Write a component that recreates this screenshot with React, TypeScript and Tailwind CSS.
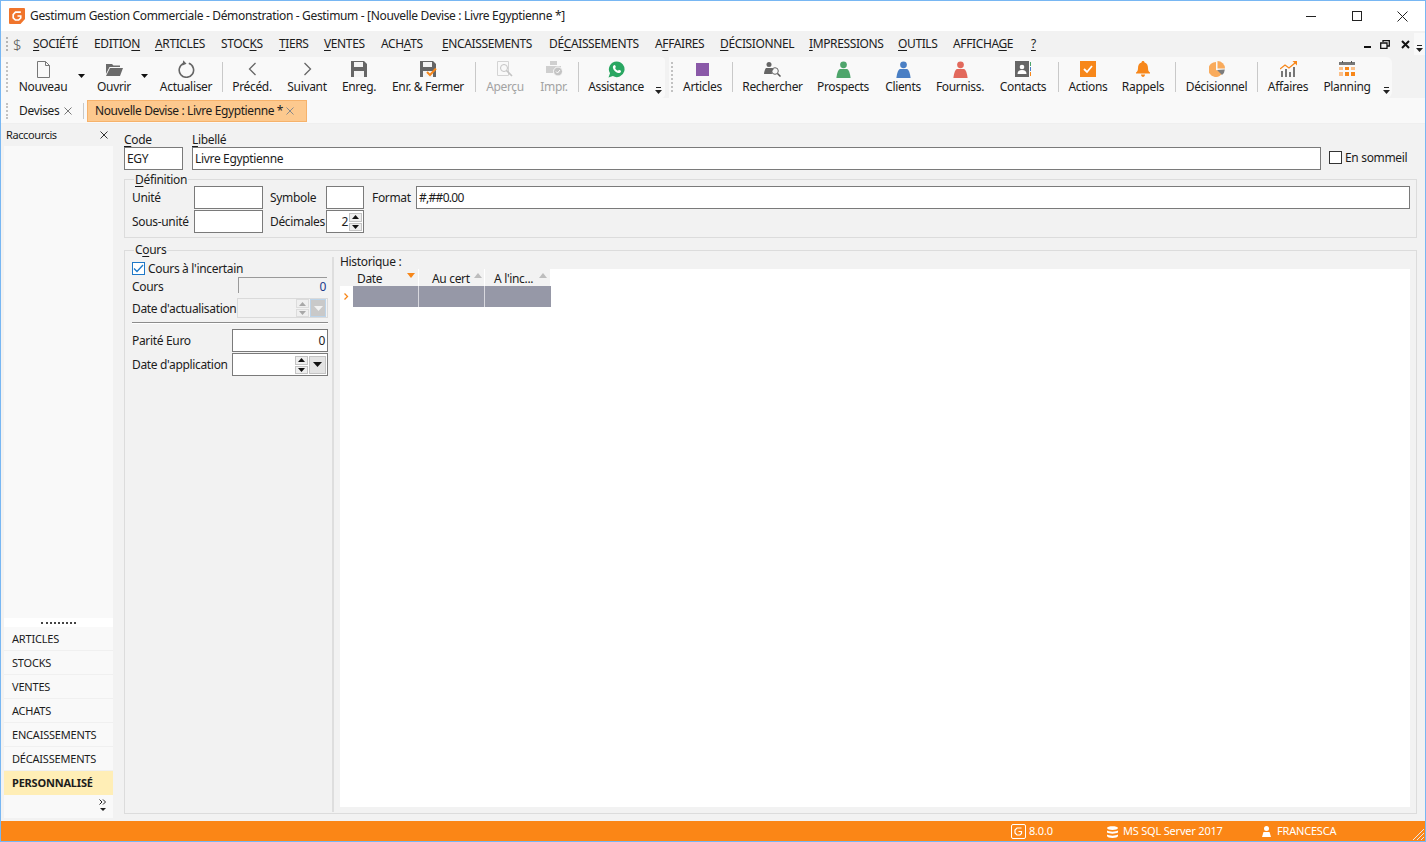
const font = "font-['Noto_Sans','Open_Sans',sans-serif]";

function Sep() {
  return <div className="w-px h-[30px] mt-[5px] bg-[#c9c9c9] shrink-0" />;
}

function ToolButton(props: {
  label: string;
  width: string;
  disabled?: boolean;
  children?: React.ReactNode;
}) {
  return (
    <div className={`${props.width} shrink-0 flex flex-col items-center`}>
      <div className="h-[22px] mt-[1px] flex items-center justify-center">
        {props.children}
      </div>
      <span
        className={`-mt-px leading-[16px] whitespace-nowrap ${
          props.disabled ? "text-[#a3a3a3]" : "text-[#1c1c1c]"
        }`}
      >
        {props.label}
      </span>
    </div>
  );
}

function Caret() {
  return (
    <svg width="7" height="4" viewBox="0 0 7 4">
      <path d="M0 0h7L3.5 4z" fill="#111" />
    </svg>
  );
}

function Overflow() {
  return (
    <svg width="7" height="7" viewBox="0 0 7 7">
      <path d="M1 0h5v1H1z" fill="#222" />
      <path d="M0 3h7L3.5 7z" fill="#222" />
    </svg>
  );
}

function Person({ color }: { color: string }) {
  return (
    <svg width="15" height="17" viewBox="0 0 16 18">
      <circle cx="8" cy="4" r="3.6" fill={color} />
      <path d="M4 8.500h8c1.500 1 3 4 3.600 9.500H.4C1 12.500 2.500 9.500 4 8.500z" fill={color} />
    </svg>
  );
}

function Glyph({ d, stroke = "#666", w = 1.4 }: { d: string; stroke?: string; w?: number }) {
  return <path d={d} fill="none" stroke={stroke} strokeWidth={w} />;
}

function Floppy() {
  return (
    <>
      <path d="M0 0h13l3 3v13H0z" fill="#666" />
      <path d="M3 1h9v5H3z" fill="#f4f4f4" />
      <path d="M3 10h10v6H3z" fill="#f4f4f4" />
    </>
  );
}

function Menu({ text, mark, width }: { text: string; mark: number; width?: string }) {
  return (
    <span className={`${width ?? ""} shrink-0 whitespace-nowrap`}>
      {text.slice(0, mark)}
      <u className="underline-offset-2">{text[mark]}</u>
      {text.slice(mark + 1)}
    </span>
  );
}

function Field(props: { width: string; value?: string; right?: boolean }) {
  return (
    <div
      className={`${props.width} h-[23px] shrink-0 border border-[#7a7a7a] bg-white flex items-center px-[2px] leading-[18px] ${
        props.right ? "justify-end" : ""
      }`}
    >
      {props.value}
    </div>
  );
}

function Spinner({ disabled }: { disabled?: boolean }) {
  const fill = disabled ? "#a8a8a8" : "#111";
  const bg = disabled ? "bg-[#efefef] border-[#dcdcdc]" : "bg-[#eeeeee] border-[#c4c4c4]";
  return (
    <div className="w-[13px] h-[18px] flex flex-col gap-px shrink-0">
      <div className={`h-[9px] border ${bg} flex items-center justify-center`}>
        <svg width="7" height="4" viewBox="0 0 7 4">
          <path d="M3.500 0L7 4H0z" fill={fill} />
        </svg>
      </div>
      <div className={`h-[8px] border ${bg} flex items-center justify-center`}>
        <svg width="7" height="4" viewBox="0 0 7 4">
          <path d="M0 0h7L3.500 4z" fill={fill} />
        </svg>
      </div>
    </div>
  );
}

function SortHead(props: { label: string; width: string; pad: string; gap: string; active?: boolean }) {
  return (
    <div className={`${props.width} ${props.pad} h-full border-r border-white flex items-center shrink-0 pt-[2px]`}>
      <span className="whitespace-nowrap">{props.label}</span>
      <svg className={`${props.gap} -mt-[6px]`} width="8" height="5" viewBox="0 0 8 5">
        {props.active ? (
          <path d="M0 0h8L4 5z" fill="#f7871a" />
        ) : (
          <path d="M4 0l4 5H0z" fill="#bdbdbd" />
        )}
      </svg>
    </div>
  );
}

export default function App() {
  const shortcuts = ["ARTICLES", "STOCKS", "VENTES", "ACHATS", "ENCAISSEMENTS", "DÉCAISSEMENTS"];

  return (
    <div className={`${font} w-[1426px] h-[842px] overflow-hidden flex flex-col border border-[#78b7f3] bg-[#f2f2f2] text-[12px] tracking-[-0.33px] text-[#1c1c1c]`}>
      {/* title bar */}
      <div className="h-[30px] shrink-0 bg-white flex items-center">
        <svg className="ml-[8px]" width="16" height="16" viewBox="0 0 16 16">
          <path d="M1 0h14a1 1 0 0 1 1 1v10l-4.500 5H1a1 1 0 0 1-1-1V1a1 1 0 0 1 1-1z" fill="#f0752c" />
          <path d="M11.800 4.200H6.500L4.200 6.500v3.300l2.200 2.200h3.300l2-2V8H8.500" fill="none" stroke="#fff" strokeWidth="1.700" />
        </svg>
        <span className="ml-[5px] text-[#222] whitespace-nowrap">
          Gestimum Gestion Commerciale - Démonstration - Gestimum - [Nouvelle Devise : Livre Egyptienne *]
        </span>
        <div className="ml-auto flex items-center">
          <div className="w-[46px] flex justify-center">
            <div className="w-[10px] h-px bg-[#222]" />
          </div>
          <div className="w-[46px] flex justify-center">
            <div className="w-[10px] h-[10px] border border-[#222]" />
          </div>
          <div className="w-[45px] flex justify-center">
            <svg width="11" height="11" viewBox="0 0 11 11">
              <path d="M.500.500l10 10M10.500.500l-10 10" stroke="#222" fill="none" />
            </svg>
          </div>
        </div>
      </div>

      {/* menu */}
      <div className="h-[26px] shrink-0 flex items-center">
        <div className="ml-[5px] w-[2px] h-[14px] border-l-2 border-dotted border-[#b5b5b5]" />
        <span className="ml-[5px] w-[15px] text-[15px] font-light text-[#555] leading-[20px]">$</span>
        <div className="ml-[5px] flex text-[#1c1c1c] tracking-[-0.38px]">
          <Menu text="SOCIÉTÉ" mark={0} width="w-[61px]" />
          <Menu text="EDITION" mark={6} width="w-[61px]" />
          <Menu text="ARTICLES" mark={0} width="w-[66px]" />
          <Menu text="STOCKS" mark={4} width="w-[58px]" />
          <Menu text="TIERS" mark={0} width="w-[45px]" />
          <Menu text="VENTES" mark={0} width="w-[57px]" />
          <Menu text="ACHATS" mark={3} width="w-[61px]" />
          <Menu text="ENCAISSEMENTS" mark={0} width="w-[107px]" />
          <Menu text="DÉCAISSEMENTS" mark={2} width="w-[106px]" />
          <Menu text="AFFAIRES" mark={1} width="w-[65px]" />
          <Menu text="DÉCISIONNEL" mark={0} width="w-[89px]" />
          <Menu text="IMPRESSIONS" mark={0} width="w-[89px]" />
          <Menu text="OUTILS" mark={0} width="w-[55px]" />
          <Menu text="AFFICHAGE" mark={7} width="w-[78px]" />
          <Menu text="?" mark={0} />
        </div>
        <div className="ml-auto flex items-center">
          <div className="w-[7px] h-[2px] mt-[6px] bg-[#111]" />
          <svg className="ml-[9px]" width="10" height="9" viewBox="0 0 10 9">
            <path d="M3 2V.700h6.300V6H7.500M.700 3h6.300v5.300H.700z" fill="none" stroke="#111" strokeWidth="1.300" />
          </svg>
          <svg className="ml-[11px]" width="9" height="9" viewBox="0 0 9 9">
            <path d="M1 1l7 7M8 1L1 8" stroke="#111" strokeWidth="2" />
          </svg>
          <div className="ml-[4px] w-[11px] h-[22px] bg-[#f9f9f9] flex items-end justify-center pb-[3px]">
            <Overflow />
          </div>
        </div>
      </div>

      {/* toolbars */}
      <div className="h-[41px] shrink-0 flex bg-[#f2f2f2]">
        <div className="w-[664px] rounded-r bg-[#f9f9f9] flex pl-[5px]">
          <div className="w-[2px] h-[30px] mt-[5px] mr-[4px] border-l-2 border-dotted border-[#c2c2c2] shrink-0" />
          <ToolButton label="Nouveau" width="w-[62px]">
            <svg width="13" height="17" viewBox="0 0 13 17">
              <path d="M.500.500h8l4 4v12H.500zM8.500.500v4h4" fill="none" stroke="#777" />
            </svg>
          </ToolButton>
          <div className="w-[16px] shrink-0 pt-[17px] pl-[4px]"><Caret /></div>
          <ToolButton label="Ouvrir" width="w-[48px]">
            <svg width="17" height="13" viewBox="0 0 17 13">
              <path d="M0 1h6l1.500 1.500H14V4H3.500L0 11z" fill="#6b6b6b" />
              <path d="M4 5h13l-3 8H0z" fill="#6b6b6b" />
            </svg>
          </ToolButton>
          <div className="w-[12px] shrink-0 pt-[17px] pl-[3px]"><Caret /></div>
          <ToolButton label="Actualiser" width="w-[72px]">
            <svg width="17" height="18" viewBox="0 0 17 18">
              <Glyph d="M10.800 3.300A7.200 7.200 0 1 1 5.500 3.500" w={1.600} />
              <path d="M5.200.300L8.500 3.700 4.500 5.500z" fill="#666" />
            </svg>
          </ToolButton>
          <Sep />
          <ToolButton label="Précéd." width="w-[58px]">
            <svg width="9" height="14" viewBox="0 0 9 14">
              <Glyph d="M7.500 1L1.500 7l6 6" w={1.300} />
            </svg>
          </ToolButton>
          <ToolButton label="Suivant" width="w-[52px]">
            <svg width="9" height="14" viewBox="0 0 9 14">
              <Glyph d="M1.500 1l6 6-6 6" w={1.300} />
            </svg>
          </ToolButton>
          <ToolButton label="Enreg." width="w-[52px]">
            <svg width="16" height="16" viewBox="0 0 16 16">
              <Floppy />
            </svg>
          </ToolButton>
          <ToolButton label="Enr. & Fermer" width="w-[86px]">
            <svg width="17" height="16" viewBox="0 0 17 16">
              <Floppy />
              <path d="M7 11l3 3 6-6.500" fill="none" stroke="#f7871a" strokeWidth="2" />
            </svg>
          </ToolButton>
          <div className="ml-[4px] flex"><Sep /></div>
          <ToolButton label="Aperçu" width="w-[58px]" disabled>
            <svg width="16" height="16" viewBox="0 0 16 16">
              <path d="M.500.500h11v14H.500z" fill="none" stroke="#d4d4d4" />
              <circle cx="7" cy="7" r="3.500" fill="none" stroke="#c4c4c4" />
              <path d="M9.500 9.500L15 15" stroke="#c4c4c4" strokeWidth="1.600" />
            </svg>
          </ToolButton>
          <ToolButton label="Impr." width="w-[40px]" disabled>
            <svg width="17" height="16" viewBox="0 0 17 16">
              <path d="M4 0h7v4H4zM0 5h15v7H0z" fill="#cfcfcf" />
              <circle cx="12" cy="10.500" r="4.500" fill="#c4c4c4" stroke="#f9f9f9" />
              <path d="M10 10.500l1.500 1.500 2.500-3" fill="none" stroke="#fff" />
            </svg>
          </ToolButton>
          <div className="ml-[4px] flex"><Sep /></div>
          <ToolButton label="Assistance" width="w-[74px]">
            <svg width="17" height="17" viewBox="0 0 17 17">
              <path d="M8.700.500a7.800 7.800 0 1 1-3.800 14.600L.500 16.500l1.500-4.200A7.800 7.800 0 0 1 8.700.500z" fill="#2aa762" />
              <path d="M6 4.200c-1 .500-1.300 1.500-1 2.800.6 2.300 2.500 4.300 5 5 1.200.300 2.300 0 2.800-1l.2-1.200-2.100-1-.9 1c-1.300-.500-2.300-1.500-2.900-2.800l.8-1-.9-2.100z" fill="#fff" />
            </svg>
          </ToolButton>
          <div className="w-[12px] shrink-0 pt-[30px] pl-[2px]"><Overflow /></div>
        </div>
        <div className="ml-[4px] w-[723px] rounded-r-md bg-[#f9f9f9] flex pl-[2px]">
          <div className="w-[2px] h-[30px] mt-[5px] border-l-2 border-dotted border-[#c2c2c2] shrink-0" />
          <ToolButton label="Articles" width="w-[59px]">
            <div className="w-[13px] h-[13px] bg-[#8a59a8]" />
          </ToolButton>
          <Sep />
          <ToolButton label="Rechercher" width="w-[79px]">
            <svg width="17" height="15" viewBox="0 0 17 15">
              <circle cx="5" cy="2.500" r="2.500" fill="#666" />
              <path d="M2 6h6l2 1a4.500 4.500 0 0 0-2 5H0c0-2 1-5 2-6z" fill="#666" />
              <circle cx="11" cy="9" r="3.300" fill="none" stroke="#666" />
              <path d="M13.500 11.500L16.500 14.500" stroke="#555" strokeWidth="1.500" />
            </svg>
          </ToolButton>
          <ToolButton label="Prospects" width="w-[62px]">
            <Person color="#4ea56b" />
          </ToolButton>
          <ToolButton label="Clients" width="w-[58px]">
            <Person color="#4a7fc4" />
          </ToolButton>
          <ToolButton label="Fourniss." width="w-[56px]">
            <Person color="#e2695c" />
          </ToolButton>
          <ToolButton label="Contacts" width="w-[70px]">
            <svg width="16" height="16" viewBox="0 0 16 16">
              <path d="M0 0h14v16H0z" fill="#666" />
              <circle cx="7" cy="6" r="2.300" fill="#fff" />
              <path d="M2.500 13c0-2.500 1.500-4 4.500-4s4.500 1.500 4.500 4z" fill="#fff" />
              <path d="M15 1h1v4h-1z" fill="#4ea56b" />
              <path d="M15 6h1v4h-1z" fill="#4a7fc4" />
              <path d="M15 11h1v4h-1z" fill="#f7871a" />
            </svg>
          </ToolButton>
          <Sep />
          <ToolButton label="Actions" width="w-[58px]">
            <svg width="16" height="16" viewBox="0 0 16 16">
              <path d="M0 0h16v16H0z" fill="#f7871a" />
              <path d="M4 8l3 3 5-6" fill="none" stroke="#fff" strokeWidth="1.800" />
            </svg>
          </ToolButton>
          <ToolButton label="Rappels" width="w-[52px]">
            <svg width="16" height="16" viewBox="0 0 16 16">
              <path d="M8 0c1 0 1.500.700 1.500 1.500C12 2.200 13 4.500 13 7c0 2 .500 3.500 2 4.500V12.500H1v-1C2.500 10.500 3 9 3 7c0-2.500 1-4.800 3.500-5.500C6.500.700 7 0 8 0zM6 13.500h4C10 15 9 16 8 16s-2-1-2-2.500z" fill="#f7871a" />
            </svg>
          </ToolButton>
          <div className="ml-[6px] flex"><Sep /></div>
          <ToolButton label="Décisionnel" width="w-[81px]">
            <svg width="16" height="16" viewBox="0 0 16 16">
              <path d="M7 1a7.500 7.500 0 1 0 7 10L7 9z" fill="#f9ab5c" />
              <path d="M8.500 0A7.500 7.500 0 0 1 16 7.500H8.500z" fill="#f9ab5c" />
              <path d="M8 9l7.800-.500A7.500 7.500 0 0 1 13 14z" fill="#7d7d7d" />
            </svg>
          </ToolButton>
          <Sep />
          <ToolButton label="Affaires" width="w-[60px]">
            <svg width="17" height="16" viewBox="0 0 17 16">
              <path d="M1 10h2v6H1zM5 8h2v8H5zM9 11h2v5H9zM13 6h2v10h-2z" fill="#777" />
              <path d="M0 8l5-4 4 3 6-5" fill="none" stroke="#f7871a" strokeWidth="1.300" />
              <path d="M12.500 0H17v4.500z" fill="#f7871a" />
            </svg>
          </ToolButton>
          <ToolButton label="Planning" width="w-[58px]">
            <svg width="16" height="16" viewBox="0 0 16 16">
              <path d="M0 1h16v3H0z" fill="#777" />
              <path d="M3 0h1v2H3zM12 0h1v2h-1z" fill="#555" />
              <path d="M0 6h4v3H0zM6 6h4v3H6zM12 6h4v3h-4zM0 11h4v4H0zM6 11h4v4H6z" fill="#fbc08a" />
              <path d="M6 6h4v3H6zM12 11h4v4h-4zM6 11h4v4H6z" fill="#f7871a" />
            </svg>
          </ToolButton>
          <div className="pt-[30px] pl-[7px]"><Overflow /></div>
        </div>
      </div>

      {/* tabs */}
      <div className="h-[26px] shrink-0 bg-[#f9f9f9] border-b border-[#efefef] flex items-center">
        <div className="ml-[5px] w-[2px] h-[16px] border-l-2 border-dotted border-[#c2c2c2]" />
        <span className="ml-[11px] w-[40px]">Devises</span>
        <svg className="ml-[5px]" width="8" height="8" viewBox="0 0 8 8">
          <path d="M.500.500l7 7M7.500.500l-7 7" stroke="#777" />
        </svg>
        <div className="ml-[11px] w-px h-[16px] bg-[#c9c9c9]" />
        <div className="ml-[3px] w-[220px] h-[22px] bg-[#fdc98e] border border-[#f6b26b] flex items-center pl-[7px]">
          <span className="w-[191px] whitespace-nowrap tracking-[-0.4px]">Nouvelle Devise : Livre Egyptienne *</span>
          <svg width="8" height="8" viewBox="0 0 8 8">
            <path d="M.500.500l7 7M7.500.500l-7 7" stroke="#8a8a8a" />
          </svg>
        </div>
      </div>

      {/* body */}
      <div className="flex-1 min-h-0 flex">
        {/* shortcuts */}
        <div className="w-[109px] ml-[3px] shrink-0 flex flex-col">
          <div className="h-[22px] flex items-center pl-[2px] text-[11px] tracking-[-0.4px]">
            <span>Raccourcis</span>
            <svg className="ml-auto mr-[5px]" width="8" height="8" viewBox="0 0 8 8">
              <path d="M.500.500l7 7M7.500.500l-7 7" stroke="#333" />
            </svg>
          </div>
          <div className="flex-1 bg-[#f9f9f9]" />
          <div className="h-[9px] bg-white flex justify-center items-center">
            <div className="w-[35px] border-t-2 border-dotted border-[#444]" />
          </div>
          {shortcuts.map((s) => (
            <div key={s} className="h-[24px] bg-[#f9f9f9] border-b border-[#f0f0f0] flex items-center pl-[8px] pt-px text-[11px] tracking-[-0.2px]">
              {s}
            </div>
          ))}
          <div className="h-[24px] bg-[#ffeeb6] flex items-center pl-[8px] text-[11px] tracking-[-0.2px] font-bold">
            PERSONNALISÉ
          </div>
          <div className="h-[23px] bg-[#f9f9f9] flex flex-col items-end pr-[6px] pt-[4px] gap-[3px]">
            <svg width="8" height="6" viewBox="0 0 8 6">
              <path d="M.500.500l2.500 2.500-2.500 2.500M4 .500l2.500 2.500L4 5.500" fill="none" stroke="#222" />
            </svg>
            <svg className="mr-[1px]" width="6" height="3" viewBox="0 0 6 3">
              <path d="M0 0h6L3 3z" fill="#222" />
            </svg>
          </div>
          <div className="h-[3px]" />
        </div>

        {/* form */}
        <div className="flex-1 min-w-0 pl-[11px] pr-[8px] pt-[8px]">
          <div className="flex">
            <div className="w-[59px] shrink-0">
              <div className="h-[15px] leading-[16px]"><Menu text="Code" mark={0} /></div>
              <Field width="w-[59px]" value="EGY" />
            </div>
            <div className="ml-[9px] w-[1129px] shrink-0">
              <div className="h-[15px] leading-[16px]"><Menu text="Libellé" mark={0} /></div>
              <Field width="w-[1129px]" value="Livre Egyptienne" />
            </div>
            <div className="ml-[8px] mt-[19px] flex items-start">
              <div className="w-[13px] h-[13px] border border-[#333] bg-white" />
              <span className="ml-[3px] leading-[13px] whitespace-nowrap">En sommeil</span>
            </div>
          </div>

          <fieldset className="mt-[2px] border border-[#dcdcdc] h-[66px]">
            <legend className="ml-[9px] px-[1px] pt-px leading-[14px]"><Menu text="Définition" mark={0} /></legend>
            <div className="-mt-px flex items-center pl-[7px] pr-[6px]">
              <span className="w-[62px] shrink-0">Unité</span>
              <Field width="w-[69px]" />
              <span className="ml-[7px] w-[56px] shrink-0">Symbole</span>
              <Field width="w-[38px]" />
              <span className="ml-[8px] w-[44px] shrink-0">Format</span>
              <div className="flex-1 h-[23px] border border-[#7a7a7a] bg-white flex items-center px-[2px] tracking-[-0.7px]">#,##0.00</div>
            </div>
            <div className="mt-px flex items-center pl-[7px]">
              <span className="w-[62px] shrink-0">Sous-unité</span>
              <Field width="w-[69px]" />
              <span className="ml-[7px] w-[56px] shrink-0">Décimales</span>
              <div className="w-[38px] h-[23px] border border-[#7a7a7a] bg-white flex items-center justify-end pr-px">
                <span className="mr-px">2</span>
                <Spinner />
              </div>
            </div>
          </fieldset>

          <fieldset className="mt-[5px] border border-[#dcdcdc] h-[571px]">
            <legend className="ml-[9px] px-[1px] leading-[14px]"><Menu text="Cours" mark={1} /></legend>
            <div className="h-[555px] flex">
              <div className="w-[209px] pl-[7px] pr-[4px] border-r-2 border-[#dedede] shrink-0 flex flex-col">
                <div className="mt-[5px] h-[13px] flex items-center">
                  <div className="w-[13px] h-[13px] border border-[#1e78c8] bg-white flex items-center justify-center shrink-0">
                    <svg width="11" height="9" viewBox="0 0 11 9">
                      <path d="M1 4.500l3 3 6-6.500" fill="none" stroke="#1e78c8" strokeWidth="1.300" />
                    </svg>
                  </div>
                  <span className="ml-[3px] whitespace-nowrap">Cours à l'incertain</span>
                </div>
                <div className="mt-[2px] h-[16px] flex items-center">
                  <span className="w-[106px] shrink-0 pt-[3px]">Cours</span>
                  <div className="w-[89px] h-[16px] border-t border-l border-[#9a9a9a] bg-[#f2f2f2] text-right pr-px leading-[17px] text-[#1d3a8a]">0</div>
                </div>
                <div className="mt-[5px] h-[20px] flex items-center">
                  <span className="w-[105px] shrink-0 whitespace-nowrap pt-[2px]">Date d'actualisation</span>
                  <div className="w-[91px] h-[20px] border border-[#dadada] bg-[#f2f2f2] flex items-center justify-end pr-px">
                    <Spinner disabled />
                    <div className="ml-[1px] w-[16px] h-[18px] border border-[#bcd3e8] bg-[#c9c9c9] flex items-center justify-center">
                      <svg width="9" height="5" viewBox="0 0 9 5">
                        <path d="M0 0h9L4.500 5z" fill="#f2f2f2" />
                      </svg>
                    </div>
                  </div>
                </div>
                <div className="mt-[4px] h-[2px] border-t border-[#8c8c8c] border-b-[#ffffff] border-b" />
                <div className="mt-[5px] h-[23px] flex items-center">
                  <span className="w-[100px] shrink-0 pt-px">Parité Euro</span>
                  <Field width="w-[96px]" value="0" right />
                </div>
                <div className="mt-px h-[23px] flex items-center">
                  <span className="w-[100px] shrink-0 whitespace-nowrap">Date d'application</span>
                  <div className="w-[96px] h-[23px] border border-[#7a7a7a] bg-white flex items-center justify-end pr-px">
                    <Spinner />
                    <div className="ml-[1px] w-[17px] h-[18px] border border-[#c4c4c4] bg-[#e3e3e3] flex items-center justify-center">
                      <svg width="9" height="5" viewBox="0 0 9 5">
                        <path d="M0 0h9L4.500 5z" fill="#111" />
                      </svg>
                    </div>
                  </div>
                </div>
              </div>
              <div className="flex-1 min-w-0 pl-[6px] pr-[6px] flex flex-col pb-[5px]">
                <div className="h-[12px] leading-[9px] whitespace-nowrap">Historique :</div>
                <div className="flex-1 bg-white">
                  <div className="w-[211px] h-[17px] bg-[#f2f2f2] flex">
                    <div className="w-[13px] shrink-0" />
                    <SortHead label="Date" width="w-[66px]" pad="pl-[4px]" gap="ml-[25px]" active />
                    <SortHead label="Au cert" width="w-[66px]" pad="pl-[13px]" gap="ml-[4px]" />
                    <SortHead label="A l'inc..." width="w-[66px]" pad="pl-[9px]" gap="ml-[6px]" />
                  </div>
                  <div className="w-[211px] h-[21px] flex">
                    <div className="w-[13px] shrink-0 flex items-center justify-center bg-white">
                      <svg width="5" height="7" viewBox="0 0 5 7">
                        <path d="M.500.500l3 3-3 3" fill="none" stroke="#f7871a" strokeWidth="1.300" />
                      </svg>
                    </div>
                    <div className="w-[66px] bg-[#9698a7] border-r border-[#d8d8de]" />
                    <div className="w-[66px] bg-[#9698a7] border-r border-[#d8d8de]" />
                    <div className="w-[66px] bg-[#9698a7]" />
                  </div>
                </div>
              </div>
            </div>
          </fieldset>
        </div>
      </div>

      {/* status bar */}
      <div className="h-[20px] shrink-0 bg-[#fb8616] flex items-center text-white text-[11px] tracking-[-0.2px] relative pt-px">
        <svg className="ml-[1010px]" width="15" height="15" viewBox="0 0 15 15">
          <rect x=".500" y=".500" width="14" height="14" rx="1.500" fill="none" stroke="#fff" />
          <path d="M10.500 4H6L4 6v3l2 2h3l1.500-1.500V7.500H7.500" fill="none" stroke="#fff" strokeWidth="1.200" />
        </svg>
        <span className="ml-[3px] w-[24px]">8.0.0</span>
        <svg className="ml-[54px]" width="11" height="12" viewBox="0 0 11 12">
          <path d="M0 2c0-2.500 11-2.500 11 0S0 4.500 0 2zM0 4.500c2 1.500 9 1.500 11 0V6.500C9 8 2 8 0 6.500zM0 8.500c2 1.500 9 1.500 11 0V10c0 2.500-11 2.500-11 0z" fill="#fff" />
        </svg>
        <span className="ml-[5px] w-[99px] whitespace-nowrap">MS SQL Server 2017</span>
        <svg className="ml-[40px]" width="9" height="11" viewBox="0 0 9 11">
          <circle cx="4.500" cy="2.500" r="2.500" fill="#fff" />
          <path d="M1.500 6h6L9 11H0z" fill="#fff" />
        </svg>
        <span className="ml-[6px]">FRANCESCA</span>
        <svg className="absolute right-[1px] bottom-[1px]" width="12" height="12" viewBox="0 0 12 12">
          <path d="M12 1L1 12M12 5l-7 7M12 9l-3 3" stroke="#e8e8e8" />
        </svg>
      </div>
    </div>
  );
}
